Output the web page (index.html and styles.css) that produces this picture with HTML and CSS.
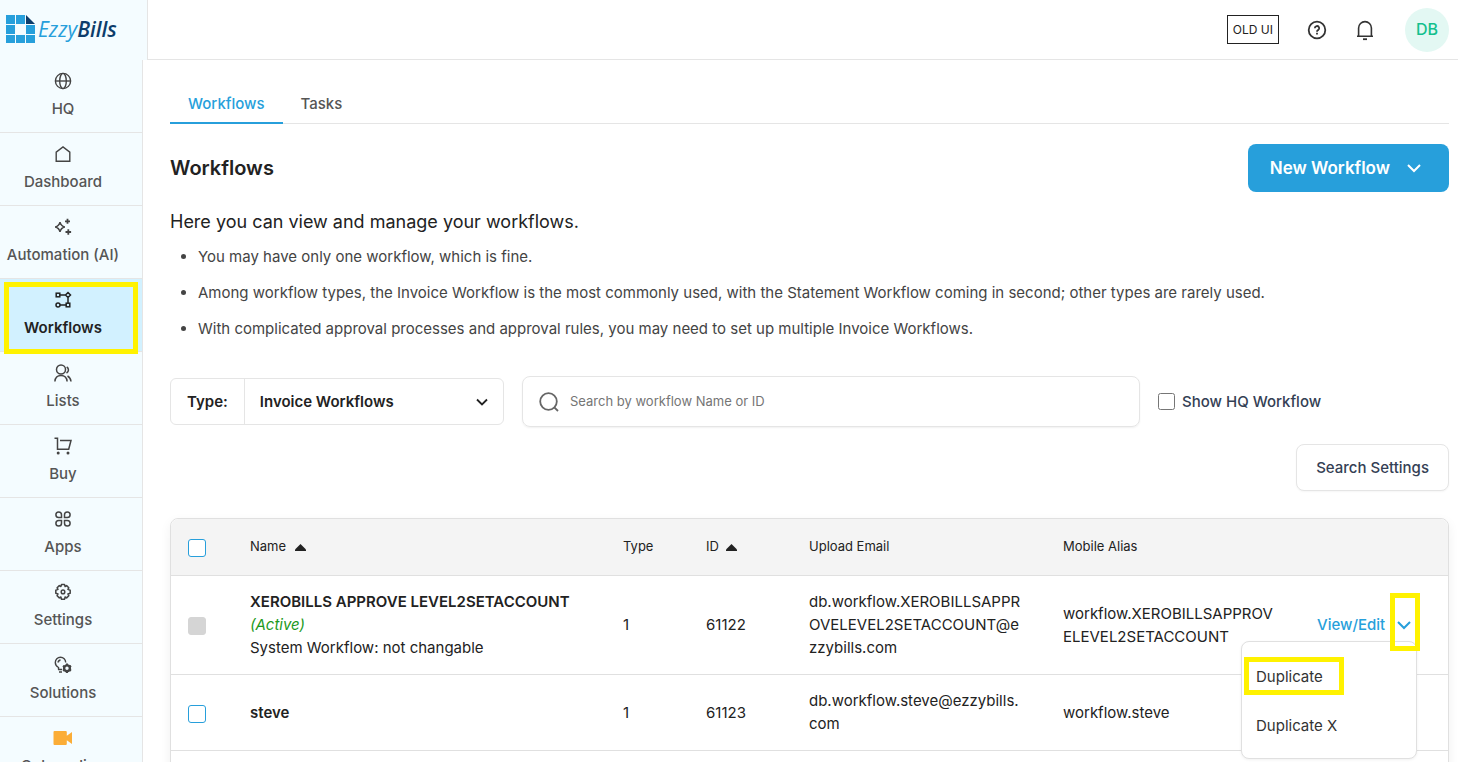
FILE: index.html
```html
<!DOCTYPE html>
<html lang="en">
<head>
    <meta charset="UTF-8">
    <meta name="viewport" content="width=device-width, initial-scale=1.0">
    <title>EzzyBills - Workflows</title>
    <link rel="stylesheet" href="styles.css">
</head>
<body>
    <header class="topbar">
        <a class="logo" href="#" aria-label="EzzyBills">
            <svg width="32" height="29" viewBox="0 0 32 29">
                <g fill="#279fdb">
                    <rect x="0" y="0" width="9" height="9"/>
                    <rect x="10" y="0" width="9" height="9"/>
                    <rect x="0" y="10" width="9" height="9"/>
                    <rect x="20" y="10" width="9" height="9"/>
                    <rect x="0" y="20" width="9" height="8"/>
                    <rect x="10" y="20" width="9" height="8"/>
                    <rect x="20" y="20" width="9" height="8"/>
                </g>
                <path d="M20 0l9 9h-9z" fill="#0d3d6b"/>
            </svg>
            <span class="logo-text">Ezzy<span class="logo-dark">Bills</span></span>
        </a>
        <div class="topbar-right">
            <button class="old-ui">OLD UI</button>
            <button class="icon-button" aria-label="Help">
                <svg width="20" height="20" viewBox="0 0 20 20" fill="none" stroke="#333" stroke-width="1.8">
                    <circle cx="10" cy="10" r="8.3"/>
                    <path d="M7.8 8.2a2.2 2.2 0 1 1 3.3 1.9c-.8.5-1.1.8-1.1 1.6"/>
                    <path d="M10 12.8v1.7"/>
                </svg>
            </button>
            <button class="icon-button" aria-label="Notifications">
                <svg width="20" height="22" viewBox="0 0 20 22" fill="none" stroke="#333" stroke-width="1.6">
                    <path d="M3.6 17V9a6.4 6.4 0 0 1 12.8 0v8M2 17.3h16"/>
                    <path d="M8 20.2h4" stroke-width="1.8"/>
                </svg>
            </button>
            <button class="avatar">DB</button>
        </div>
    </header>

    <div class="layout">
        <nav class="sidebar">
            <a class="nav-item" href="#">
                <svg width="18" height="18" viewBox="0 0 18 18" fill="none" stroke="currentColor" stroke-width="1.4">
                    <circle cx="9" cy="9" r="7.6"/>
                    <ellipse cx="9" cy="9" rx="3.3" ry="7.6"/>
                    <path d="M1.4 9h15.2"/>
                </svg>
                <span>HQ</span>
            </a>
            <a class="nav-item" href="#">
                <svg width="18" height="18" viewBox="0 0 18 18" fill="none" stroke="currentColor" stroke-width="1.4">
                    <path d="M2.2 16.2V7.2L9 1.9l6.8 5.3v9z"/>
                </svg>
                <span>Dashboard</span>
            </a>
            <a class="nav-item" href="#">
                <svg width="18" height="18" viewBox="0 0 18 18" fill="none" stroke="currentColor" stroke-width="1.5">
                    <path d="M6 4.2c.7 3 1.8 4.1 4.8 4.8-3 .7-4.1 1.8-4.8 4.8-.7-3-1.800-4.100-4.800-4.800 3-.7 4.100-1.800 4.800-4.800z"/>
                    <path d="M13.5.8v5M11 3.3h5M14.300 11.200v5.600M11.500 14h5.600" stroke-width="1.8"/>
                </svg>
                <span>Automation (AI)</span>
            </a>
            <a class="nav-item active" href="#">
                <svg width="18" height="18" viewBox="0 0 18 18" fill="none" stroke="currentColor" stroke-width="1.5">
                    <rect x="2.2" y="2.2" width="3.6" height="3.6"/>
                    <path d="M14 1.5L16.5 4 14 6.5 11.5 4zM5.800 4h5.700M14 6.500v5.500M6 14h6"/>
                    <circle cx="4" cy="14" r="2"/>
                    <rect x="12.2" y="12.2" width="3.6" height="3.6"/>
                </svg>
                <span>Workflows</span>
            </a>
            <a class="nav-item" href="#">
                <svg width="18" height="18" viewBox="0 0 18 18" fill="none" stroke="currentColor" stroke-width="1.5">
                    <circle cx="7" cy="5.500" r="4.500"/>
                    <path d="M.9 17.500c.3-4 2.500-6 6.100-6s5.800 2 6.100 6M12.700 3c2.400 1.500 2.400 4.300-.2 6M13.500 12c2 1 3.200 2.700 3.500 5.500"/>
                </svg>
                <span>Lists</span>
            </a>
            <a class="nav-item" href="#">
                <svg width="18" height="18" viewBox="0 0 18 18" fill="none" stroke="currentColor" stroke-width="1.5">
                    <path d="M.5 1.300h3v10.900h11.200l2.300-8.700H6"/>
                    <circle cx="4.200" cy="16" r="1.500" fill="currentColor" stroke="none"/>
                    <circle cx="14" cy="16" r="1.500" fill="currentColor" stroke="none"/>
                </svg>
                <span>Buy</span>
            </a>
            <a class="nav-item" href="#">
                <svg width="18" height="18" viewBox="0 0 18 18" fill="none" stroke="currentColor" stroke-width="1.5">
                    <path d="M7.500 7.500H4.700a2.800 2.800 0 1 1 2.800-2.800zM10.500 7.500V4.700a2.800 2.800 0 1 1 2.800 2.800zM7.500 10.500v2.800a2.800 2.800 0 1 1-2.800-2.800zM10.500 10.500h2.800a2.800 2.800 0 1 1-2.800 2.800z"/>
                </svg>
                <span>Apps</span>
            </a>
            <a class="nav-item" href="#">
                <svg width="18" height="18" viewBox="0 0 18 18" fill="none" stroke="currentColor" stroke-width="1.5" stroke-linejoin="round">
                    <path d="M7.500 1.500h3l.6 2 1.500-.9 2.200 2.200-.9 1.600 2.300.8v3l-2.300.8.9 1.700-2.200 2.200-1.500-.9-.6 2.300h-3l-.6-2.300-1.600.9-2.200-2.200.9-1.700-2.200-.8v-3l2.200-.8-.9-1.600 2.200-2.200 1.600.9z"/>
                    <circle cx="9" cy="8.900" r="1.800"/>
                </svg>
                <span>Settings</span>
            </a>
            <a class="nav-item" href="#">
                <svg width="18" height="18" viewBox="0 0 18 18" fill="none" stroke="currentColor" stroke-width="1.4">
                    <path d="M4.500 13.500v-2C2.300 10.300 1.300 8.700 1.300 6.500a5.200 5.200 0 0 1 10.400 0"/>
                    <path d="M4.200 6.500a2.300 2.300 0 0 1 2.300-2.300M4 13.500h4M5 16h3" stroke-width="1.7"/>
                    <circle cx="13" cy="12.300" r="2.900" stroke-width="2.400"/>
                    <path d="M13 7.600v2M13 15v2M8.900 9.900l1.800 1M15.300 13.700l1.800 1M8.900 14.700l1.800-1M15.300 10.900l1.800-1" stroke-width="2"/>
                </svg>
                <span>Solutions</span>
            </a>
            <a class="nav-item" href="#">
                <svg width="20" height="18" viewBox="0 0 20 18" fill="#fbad37">
                    <path d="M1.500 2h11.300q1 0 1 1v3.700L19 3v12l-5.200-3.700V15q0 1-1 1H1.500q-1 0-1-1V3q0-1 1-1z"/>
                </svg>
                <span>Onboarding</span>
            </a>
        </nav>

        <main class="content">
            <div class="tabs">
                <a class="tab selected" href="#">Workflows</a>
                <a class="tab" href="#">Tasks</a>
            </div>

            <div class="title-row">
                <h1>Workflows</h1>
                <button class="new-button">
                    New Workflow
                    <svg width="16" height="16" viewBox="0 0 16 16" fill="none" stroke="#fff" stroke-width="2"><path d="M2 5l6 6 6-6"/></svg>
                </button>
            </div>

            <h2>Here you can view and manage your workflows.</h2>
            <ul class="notes">
                <li>You may have only one workflow, which is fine.</li>
                <li>Among workflow types, the Invoice Workflow is the most commonly used, with the Statement Workflow coming in second; other types are rarely used.</li>
                <li>With complicated approval processes and approval rules, you may need to set up multiple Invoice Workflows.</li>
            </ul>

            <div class="filters">
                <div class="type-box">
                    <label for="type">Type:</label>
                    <select id="type">
                        <option>Invoice Workflows</option>
                    </select>
                    <svg width="12" height="12" viewBox="0 0 12 12" fill="none" stroke="#222" stroke-width="1.8"><path d="M1 3.500l5 5 5-5"/></svg>
                </div>
                <div class="search-box">
                    <svg width="20" height="20" viewBox="0 0 20 20" fill="none" stroke="#666" stroke-width="1.8">
                        <circle cx="9.500" cy="9.500" r="8.300"/>
                        <path d="M15.300 15.300L19 19"/>
                    </svg>
                    <input type="text" aria-label="Search" placeholder="Search by workflow Name or ID">
                </div>
                <label class="show-hq"><input type="checkbox">Show HQ Workflow</label>
            </div>
            <div class="settings-row">
                <button class="settings-button">Search Settings</button>
            </div>

            <div class="table-card">
                <table>
                    <colgroup>
                        <col class="col-check">
                        <col class="col-name">
                        <col class="col-type">
                        <col class="col-id">
                        <col class="col-email">
                        <col class="col-alias">
                        <col>
                    </colgroup>
                    <thead>
                        <tr>
                            <th><input type="checkbox" class="check" aria-label="Select all"></th>
                            <th>Name <svg class="sort" width="11" height="7" viewBox="0 0 11 7"><path d="M5.500 0L11 5.500V7H0V5.500z" fill="#222"/></svg></th>
                            <th>Type</th>
                            <th>ID <svg class="sort id-sort" width="11" height="7" viewBox="0 0 11 7"><path d="M5.500 0L11 5.500V7H0V5.500z" fill="#222"/></svg></th>
                            <th>Upload Email</th>
                            <th>Mobile Alias</th>
                            <th></th>
                        </tr>
                    </thead>
                    <tbody>
                        <tr>
                            <td><input type="checkbox" class="check" aria-label="Select row" disabled></td>
                            <td><strong>XEROBILLS APPROVE LEVEL2SETACCOUNT</strong> <em>(Active)</em><br>System Workflow: not changable</td>
                            <td>1</td>
                            <td>61122</td>
                            <td class="wrap">db.workflow.XEROBILLSAPPROVELEVEL2SETACCOUNT@ezzybills.com</td>
                            <td class="wrap">workflow.XEROBILLSAPPROVELEVEL2SETACCOUNT</td>
                            <td>
                                <div class="actions">
                                    <a href="#">View/Edit</a>
                                    <button class="more" aria-label="More actions">
                                        <svg width="14" height="14" viewBox="0 0 14 14" fill="none" stroke="#279fdb" stroke-width="2"><path d="M1 4l6 6 6-6"/></svg>
                                    </button>
                                    <div class="menu">
                                        <button class="menu-item marked">Duplicate</button>
                                        <button class="menu-item">Duplicate X</button>
                                    </div>
                                </div>
                            </td>
                        </tr>
                        <tr>
                            <td><input type="checkbox" class="check" aria-label="Select row"></td>
                            <td><strong>steve</strong></td>
                            <td>1</td>
                            <td>61123</td>
                            <td class="wrap">db.workflow.steve@ezzybills.com</td>
                            <td class="wrap">workflow.steve</td>
                            <td></td>
                        </tr>
                        <tr class="empty-row">
                            <td colspan="7"></td>
                        </tr>
                    </tbody>
                </table>
            </div>
        </main>
    </div>
</body>
</html>
```
FILE: styles.css
```css
* {
    box-sizing: border-box;
}
body {
    margin: 0;
    height: 100vh;
    overflow: hidden;
    display: flex;
    flex-direction: column;
    font-family: Inter, "Liberation Sans", sans-serif;
    font-size: 15px;
    line-height: 23px;
    color: #222;
    background-color: #fff;
}
a {
    text-decoration: none;
    color: inherit;
}
button, input, select {
    font: inherit;
    color: inherit;
}
button {
    cursor: pointer;
}
svg {
    flex: none;
}

/* top bar */
.topbar {
    flex: none;
    display: flex;
    justify-content: space-between;
    height: 60px;
    border-bottom: 1px solid #e5e5e5;
}
.logo {
    display: flex;
    align-items: center;
    width: 148px;
    height: 60px;
    padding: 0 0 2px 6px;
    background-color: #f4fcff;
    border-right: 1px solid #e5e5e5;
}
.logo-text {
    font-family: "Open Sans", sans-serif;
    font-size: 21px;
    font-style: italic;
    font-weight: 500;
    color: #279fdb;
}
.logo-dark {
    font-weight: 600;
    color: #0d3d6b;
}
.topbar-right {
    display: flex;
    align-items: center;
    padding-right: 9px;
}
.old-ui {
    height: 29px;
    padding: 0 5px;
    margin-right: 28px;
    font-size: 12px;
    line-height: 16px;
    background: #fff;
    border: 1px solid #222;
}
.icon-button {
    display: flex;
    padding: 0;
    margin-right: 28px;
    background: none;
    border: none;
}
.avatar {
    width: 44px;
    height: 44px;
    padding: 0;
    margin-left: 2px;
    font-size: 16px;
    font-weight: 500;
    color: #14c08d;
    background-color: #e3f8f3;
    border: none;
    border-radius: 50%;
}

/* sidebar */
.layout {
    flex: 1;
    display: flex;
    min-height: 0;
}
.sidebar {
    flex: none;
    width: 143px;
    background-color: #f4fcff;
    border-right: 1px solid #e5e5e5;
}
.nav-item {
    position: relative;
    display: flex;
    flex-direction: column;
    align-items: center;
    gap: 8px;
    height: 73px;
    padding: 12px 16px 0 0;
    font-weight: 500;
    line-height: 22px;
    color: #555;
    border-bottom: 1px solid #e5e5e5;
    white-space: nowrap;
}
.nav-item svg {
    color: #444;
}
.nav-item.active, .nav-item.active svg {
    font-weight: 600;
    color: #222;
}
.nav-item.active {
    background-color: #d2f1ff;
}
.nav-item.active::after {
    content: "";
    position: absolute;
    inset: 3px 4px -3px;
    border: 5px solid #fff200;
    z-index: 1;
}

/* content */
.content {
    flex: 1;
    min-width: 0;
    padding: 24px 9px 0 27px;
}
.tabs {
    display: flex;
    height: 40px;
    border-bottom: 1px solid #e5e5e5;
}
.tab {
    height: 40px;
    padding: 8px 18px 0;
    font-weight: 500;
    color: #555;
}
.tab.selected {
    color: #279fdb;
    border-bottom: 2px solid #279fdb;
}
.title-row {
    display: flex;
    justify-content: space-between;
    align-items: center;
    margin-top: 20px;
}
h1 {
    margin: 0;
    font-size: 20px;
    font-weight: 600;
}
.new-button {
    display: flex;
    align-items: center;
    gap: 16px;
    height: 48px;
    padding: 0 27px 0 22px;
    font-size: 17px;
    font-weight: 600;
    color: #fff;
    background-color: #279fdb;
    border: none;
    border-radius: 8px;
}
h2 {
    margin: 18px 0 0;
    font-size: 18px;
    font-weight: 400;
}
.notes {
    margin: 12px 0 0;
    padding-left: 28px;
    line-height: 24px;
    color: #444;
}
.notes li {
    margin-bottom: 12px;
}

/* filters */
.filters {
    display: flex;
    align-items: center;
    gap: 18px;
    margin-top: 35px;
}
.type-box {
    position: relative;
    display: flex;
    align-items: center;
    width: 334px;
    height: 47px;
    font-weight: 600;
    border: 1px solid #e5e5e5;
    border-radius: 6px;
}
.type-box label {
    padding: 11px 16px;
    border-right: 1px solid #e5e5e5;
}
.type-box select {
    flex: 1;
    height: 45px;
    padding: 0 15px;
    appearance: none;
    background: none;
    border: none;
}
.type-box svg {
    position: absolute;
    right: 15px;
    pointer-events: none;
}
.search-box {
    flex: 1;
    display: flex;
    align-items: center;
    gap: 11px;
    height: 51px;
    padding: 0 16px;
    border: 1px solid #e5e5e5;
    border-radius: 8px;
    box-shadow: 0 1px 2px rgba(0, 0, 0, 0.06);
}
.search-box input {
    flex: 1;
    padding: 0;
    font-size: 13px;
    background: none;
    border: none;
    outline: none;
}
.search-box input::placeholder {
    color: #757575;
}
.show-hq {
    display: flex;
    align-items: center;
    gap: 7px;
    width: 291px;
    font-weight: 500;
    color: #344054;
}
.show-hq input {
    width: 17px;
    height: 17px;
    margin: 0;
}
.settings-row {
    display: flex;
    justify-content: flex-end;
    margin: 17px 0 27px;
}
.settings-button {
    height: 47px;
    padding: 0 19px;
    font-weight: 500;
    color: #344054;
    background: #fff;
    border: 1px solid #e5e5e5;
    border-radius: 8px;
    box-shadow: 0 1px 2px rgba(0, 0, 0, 0.04);
}

/* table */
.table-card {
    border: 1px solid #e0e0e0;
    border-radius: 8px 8px 0 0;
    box-shadow: 0 4px 12px rgba(0, 0, 0, 0.06);
}
table {
    width: 100%;
    table-layout: fixed;
    border-collapse: separate;
    border-spacing: 0;
}
.col-check {
    width: 61px;
}
.col-name {
    width: 373px;
}
.col-type {
    width: 83px;
}
.col-id {
    width: 103px;
}
.col-email, .col-alias {
    width: 254px;
}
th, td {
    padding: 14px 18px 15px;
    text-align: left;
    border-bottom: 1px solid #e0e0e0;
}
th:first-child, td:first-child {
    padding: 0 17px;
}
th {
    height: 57px;
    font-size: 13px;
    font-weight: 400;
    background-color: #f4f4f4;
}
th:first-child {
    border-top-left-radius: 8px;
}
th:last-child {
    border-top-right-radius: 8px;
}
.empty-row td {
    height: 76px;
}
.sort {
    margin-left: 5px;
}
.id-sort {
    margin-left: 3px;
}
strong {
    font-weight: 600;
}
em {
    color: #1d9a1d;
}
.wrap {
    word-break: break-all;
}
.check {
    appearance: none;
    display: block;
    width: 18px;
    height: 18px;
    margin: 2px 0 0;
    background-color: #fff;
    border: 1px solid #279fdb;
    border-radius: 3px;
}
.check:disabled {
    background-color: #d5d5d5;
    border-color: #d5d5d5;
}
.actions {
    position: relative;
    display: flex;
    align-items: center;
    gap: 12px;
    font-weight: 500;
    color: #279fdb;
}
.more {
    position: relative;
    display: flex;
    padding: 0;
    background: none;
    border: none;
    z-index: 2;
}
.more::after {
    content: "";
    position: absolute;
    inset: -25px -9px -19px -7px;
    border: 5px solid #fff200;
}
.menu {
    position: absolute;
    top: 28px;
    right: 13px;
    width: 176px;
    height: 118px;
    padding: 10px 0;
    font-weight: 400;
    background-color: #fff;
    border: 1px solid #e0e0e0;
    border-radius: 8px;
    box-shadow: 0 1px 3px rgba(0, 0, 0, 0.06);
    z-index: 1;
}
.menu-item {
    position: relative;
    display: block;
    width: 100%;
    height: 49px;
    padding: 0 14px;
    text-align: left;
    color: #333;
    background: none;
    border: none;
}
.menu-item.marked::after {
    content: "";
    position: absolute;
    inset: 5px 72px 6px 2px;
    border: 5px solid #fff200;
}
```
